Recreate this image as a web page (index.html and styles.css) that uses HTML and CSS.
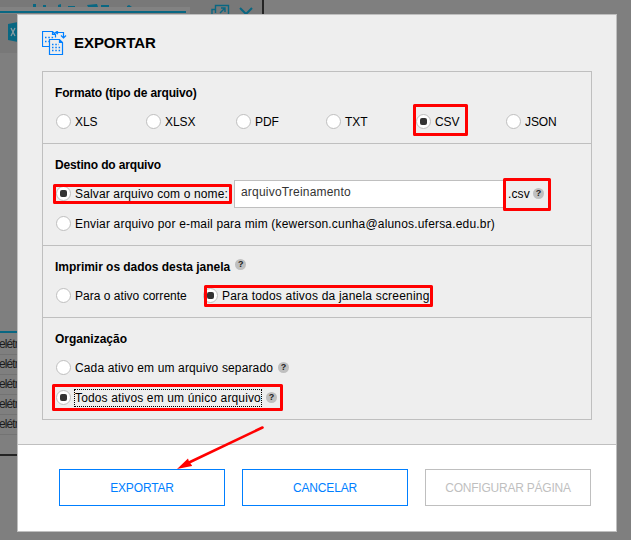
FILE: index.html
```html
<!DOCTYPE html>
<html lang="pt-BR">
<head>
<meta charset="utf-8">
<title>Exportar</title>
<link rel="stylesheet" href="styles.css">
</head>
<body>
<div class="backdrop">
  <svg class="back-art" width="631" height="540" viewBox="0 0 631 540">
    <path fill="#787878" d="M0 0h262v14H0zM0 14h18v39H0z"/>
    <path fill="#828282" d="M0 7h190v7H0z"/>
    <path fill="#096782" d="M0 11h186v2H0zM33 4h3v3h-3zM43 5h3v2h-3zM58 5l3-1v3h-3zM68 6h7v1h-7zM87 5l10-1 1 3H88zM101 5h8v2h-8zM127 6l2-1 3 2h-5z"/>
    <path fill="#096782" d="M8 24l10-2v20L8 40z"/>
    <path d="M11 28l4 8m0-8l-4 8" stroke="#8a9ca2" stroke-width="1.3"/>
    <path d="M215.500 13V5.500h13V14M212 14V9.500h3M220 13l5-5m-4 0h4v4" fill="none" stroke="#096782" stroke-width="1.400"/>
    <path d="M240 8l6 6 6-6" fill="none" stroke="#096782" stroke-width="2"/>
    <path fill="#242424" d="M262 0h2v14h-2zM0 454h18v2H0z"/>
    <path fill="#096782" d="M0 331h18v2H0z"/>
    <path fill="#737373" d="M0 354h18v1H0zM0 374h18v1H0zM0 394h18v1H0zM0 414h18v1H0zM0 434h18v1H0z"/>
  </svg>
  <ul class="back-rows"><li>elétr</li><li>elétr</li><li>elétr</li><li>elétr</li><li>elétr</li></ul>
</div>
<main class="dialog">
  <header class="head">
    <svg class="logo" width="25" height="25" viewBox="0 0 25 25" fill="none" stroke="#007fff">
      <path stroke-width="1.200" d="M7 15.500H.5V.5h10l3 3v3M10.500.5v3h3M7.500 8.500h10l3 3v12h-13zM17.500 8.500v3h3M13.500 1.500h8v5M19 4.500l2.500 2.500L24 4.500M16 0l-2.500 1.500L16 3"/>
      <path stroke-width="1.400" d="M3 6.500h9M3 10.500h4M10 13.500h7M10 16.500h9M10 19.500h9" stroke-dasharray="1.500 1.800"/>
    </svg>
    <h1>EXPORTAR</h1>
  </header>
  <div class="panel">
    <section class="group formats">
      <h2 class="tight">Formato (tipo de arquivo)</h2>
      <div class="format-row">
        <label class="opt"><i class="radio"></i><span>XLS</span></label>
        <label class="opt"><i class="radio"></i><span>XLSX</span></label>
        <label class="opt"><i class="radio"></i><span>PDF</span></label>
        <label class="opt"><i class="radio"></i><span>TXT</span></label>
        <label class="opt"><i class="radio on"></i><span>CSV</span></label>
        <label class="opt"><i class="radio"></i><span>JSON</span></label>
      </div>
    </section>
    <section class="group target">
      <h2 class="tight">Destino do arquivo</h2>
      <div class="line">
        <label class="opt save"><i class="radio on"></i><span>Salvar arquivo com o nome:</span></label>
        <div class="field">arquivoTreinamento</div>
        <span class="ext">.csv</span><b class="help">?</b>
      </div>
      <div class="line"><label class="opt"><i class="radio"></i><span class="mail">Enviar arquivo por e-mail para mim (kewerson.cunha@alunos.ufersa.edu.br)</span></label></div>
    </section>
    <section class="group print">
      <h2 class="print-title">Imprimir os dados desta janela<b class="help">?</b></h2>
      <div class="line">
        <label class="opt current"><i class="radio"></i><span>Para o ativo corrente</span></label>
        <label class="opt"><i class="radio on"></i><span class="screening">Para todos ativos da janela screening</span></label>
      </div>
    </section>
    <section class="group organize">
      <h2>Organização</h2>
      <div class="line"><label class="opt"><i class="radio"></i><span>Cada ativo em um arquivo separado</span></label><b class="help">?</b></div>
      <div class="line"><label class="opt"><i class="radio on"></i><span class="focus">Todos ativos em um único arquivo</span></label><b class="help">?</b></div>
    </section>
  </div>
  <footer class="foot">
    <button class="btn">EXPORTAR</button>
    <button class="btn">CANCELAR</button>
    <button class="btn off">CONFIGURAR PÁGINA</button>
  </footer>
</main>
<svg class="marks" width="631" height="540" viewBox="0 0 631 540">
  <g fill="none" stroke="#f00" stroke-width="3" stroke-linejoin="round">
    <rect x="414.500" y="105.500" width="52" height="29"/>
    <rect x="54.500" y="185.500" width="176" height="17"/>
    <rect x="504.500" y="179.500" width="45" height="30"/>
    <rect x="205.500" y="286.500" width="226" height="19"/>
    <rect x="53.500" y="385.500" width="228" height="24"/>
    <path d="M262.500 427.500L188 463" stroke-width="2.600" stroke-linecap="round"/>
  </g>
  <path d="M177 469l11-10.500 1 3 3 4 0 .5z" fill="#f00"/>
</svg>
</body>
</html>
```
FILE: styles.css
```css
* { box-sizing: border-box; }
body {
  margin: 0;
  width: 631px;
  height: 540px;
  overflow: hidden;
  position: relative;
  background: #7f7f7f;
  font: 12px/16px "Liberation Sans", Arial, sans-serif;
  letter-spacing: 0.14px;
  color: #000;
}
.backdrop { position: absolute; inset: 0; }
.back-art { display: block; }
.back-rows {
  position: absolute;
  top: 334px;
  left: -1px;
  width: 18px;
  overflow: hidden;
  margin: 0;
  padding: 0;
  list-style: none;
  color: #1c1c1c;
  font-size: 12px;
  line-height: 20px;
  letter-spacing: -0.9px;
}
.dialog {
  position: relative;
  margin: 14px 0 0 17px;
  width: 600px;
  height: 518px;
  border: 1px solid #bfbfbf;
  background: #eee;
  display: flex;
  flex-direction: column;
}
.head {
  height: 56px;
  padding: 16px 0 0 24px;
  display: flex;
  gap: 7px;
}
.logo { display: block; }
h1 {
  margin: 2px 0 0;
  font-size: 15px;
  line-height: 20px;
  letter-spacing: -0.05px;
}
.panel {
  width: 550px;
  height: 349px;
  margin-left: 24px;
  border: 1px solid #bfbfbf;
}
.group { padding: 13px 0 0 12px; border-bottom: 1px solid #bfbfbf; }
.group:last-child { border-bottom: 0; }
.formats { height: 72px; }
.target { height: 102px; }
.print { height: 72px; }
h2 {
  margin: 0 0 6px;
  height: 16px;
  font-size: 12px;
  line-height: 16px;
  letter-spacing: 0;
  white-space: nowrap;
}
.tight { letter-spacing: -0.15px; }
.format-row {
  display: grid;
  grid-template-columns: repeat(6, 90px);
  margin-top: 13px;
  letter-spacing: -0.1px;
}
.opt { display: flex; align-items: center; gap: 4px; height: 15px; white-space: nowrap; }
.line { display: flex; align-items: center; height: 30px; padding-bottom: 1px; }
.radio {
  width: 15px;
  height: 15px;
  margin-left: 1px;
  flex: none;
  border: 1px solid #bfbfbf;
  border-radius: 50%;
  background: #fff;
  display: grid;
  place-items: center;
}
.radio.on::after { content: ""; width: 7px; height: 7px; border-radius: 2px; background: #333; }
.save { width: 179px; letter-spacing: 0.14px; }
.mail { letter-spacing: 0.18px; }
.current { width: 147px; letter-spacing: 0.02px; }
.screening { letter-spacing: 0.2px; }
.field {
  width: 270px;
  height: 28px;
  border: 1px solid #bfbfbf;
  background: #fff;
  padding: 3px 6px;
  line-height: 16px;
  color: #333;
  letter-spacing: 0.2px;
}
.ext { margin-left: 4px; width: 25px; }
.help {
  width: 11px;
  height: 11px;
  border-radius: 50%;
  background: #bfbfbf;
  color: #222;
  font-size: 9px;
  line-height: 11px;
  text-align: center;
  flex: none;
  letter-spacing: 0;
}
.print-title { display: flex; letter-spacing: -0.03px; }
.print-title .help { margin: 0 0 0 5px; }
.organize .help { margin-left: 5px; }
.focus { outline: 1px dotted #000; }
.foot {
  height: 87px;
  margin-top: auto;
  border-top: 1px solid #bfbfbf;
  background: #fff;
  display: flex;
  gap: 17px;
  padding: 24px 0 0 41px;
}
.btn {
  width: 166px;
  height: 37px;
  padding: 0;
  border: 1px solid #007fff;
  background: #fff;
  color: #007fff;
  font: inherit;
  letter-spacing: -0.15px;
}
.btn.off { color: #bfbfbf; border-color: #bfbfbf; letter-spacing: -0.22px; }
.marks { position: absolute; top: 0; left: 0; pointer-events: none; }
```
